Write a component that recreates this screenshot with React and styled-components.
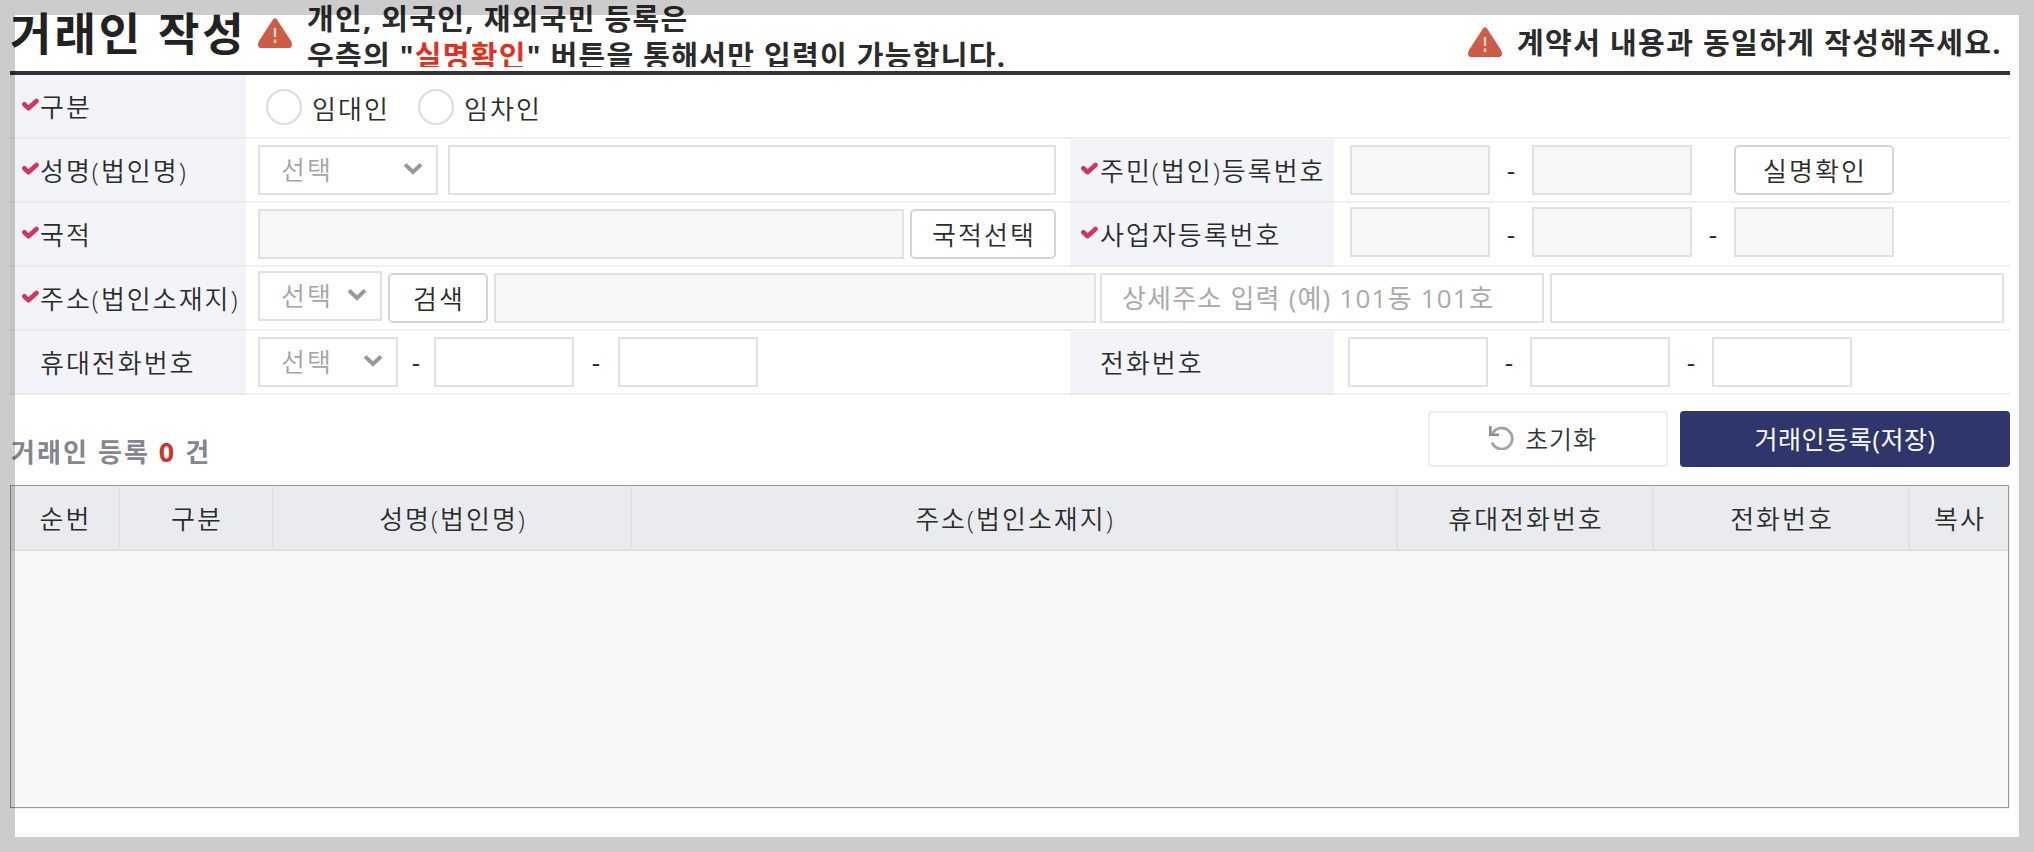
import React from "react";
import styled, { createGlobalStyle } from "styled-components";

const GlobalStyle = createGlobalStyle`
  * {
    box-sizing: border-box;
  }
  body {
    margin: 0;
    background: #fff;
    color: #2b2b2b;
    font-family: "Open Sans", "Noto Sans CJK KR", sans-serif;
    font-size: 26px;
    font-weight: 350;
    letter-spacing: 2.1px;
  }
  input,
  button {
    font: inherit;
    color: inherit;
    letter-spacing: inherit;
  }
`;

const Page = styled.div`
  position: relative;
  width: 2034px;
  height: 852px;
  padding: 0 24px 0 10px;
  overflow: hidden;
`;

// dimmed frame that lies over the edges of the popup
const DimFrame = styled.div`
  position: absolute;
  top: 0;
  left: 0;
  right: 0;
  bottom: 0;
  border: 15px solid rgba(0, 0, 0, 0.2);
  pointer-events: none;
`;

const Header = styled.header`
  display: flex;
  align-items: flex-start;
  height: 75px;
  border-bottom: 4px solid #333433;
`;

const Title = styled.h1`
  width: 236px;
  margin: 0 12px 0 0;
  padding-top: 4px;
  color: #222;
  font-size: 45px;
  font-weight: 700;
  line-height: 60px;
  letter-spacing: 3px;
  white-space: nowrap;
`;

const Hint = styled.p`
  height: 67px;
  margin: 0 0 0 15px;
  overflow: hidden;
  font-size: 29px;
  font-weight: 700;
  line-height: 37px;
  letter-spacing: 1.3px;
  white-space: nowrap;
`;

const Red = styled.span`
  color: #df3020;
`;

const Notice = styled.div`
  display: flex;
  align-items: flex-start;
  margin-left: auto;
  padding: 27px 8px 0 0;
  font-size: 29px;
  font-weight: 700;
  line-height: 31px;
  letter-spacing: 1.36px;
  white-space: nowrap;
`;

const NoticeText = styled.span`
  margin-left: 15px;
`;

const WarnSvg = styled.svg`
  flex: none;
  width: 34px;
  height: 30px;
  margin-top: ${(props) => props.$top || 0}px;
`;

const Row = styled.div`
  display: flex;
  height: 64px;
`;

const Label = styled.div`
  display: flex;
  align-items: center;
  flex: none;
  width: ${(props) => (props.$right ? 264 : 236)}px;
  padding: 0 0 0 ${(props) => (props.$right ? 11 : 12)}px;
  background: #f3f4f9;
  border-bottom: 2px solid #e9eaef;
  letter-spacing: 2px;
  white-space: nowrap;
`;

const CheckBox = styled.span`
  display: flex;
  flex: none;
  width: ${(props) => (props.$right ? 19 : 18)}px;
  margin-top: -2px;
`;

const Cell = styled.div`
  display: flex;
  align-items: center;
  flex: ${(props) => (props.$width ? "none" : 1)};
  width: ${(props) => (props.$width ? props.$width + "px" : "auto")};
  padding-left: ${(props) => props.$pad || 12}px;
  border-bottom: 2px solid #efeff4;
`;

const Radio = styled.label`
  display: flex;
  align-items: center;
  width: 152px;
  padding: 2px 0 0 8px;
`;

const RadioMark = styled.span`
  width: 36px;
  height: 36px;
  margin-right: 10px;
  border: 2px solid #dcdcdc;
  border-radius: 50%;
  background: #fff;
`;

const RadioText = styled.span`
  padding-top: 2px;
`;

const Input = styled.input`
  flex: none;
  width: ${(props) => props.$width}px;
  height: 50px;
  margin: 0 0 ${(props) => props.$lift || 0}px ${(props) => props.$gap || 0}px;
  padding: 0 20px;
  border: 2px solid #e1e1e1;
  border-radius: 0;
  background: ${(props) => (props.disabled ? "#f7f7f7" : "#fff")};
  &::placeholder {
    color: #aaa;
    font-weight: 400;
    letter-spacing: 1.2px;
    opacity: 1;
  }
`;

const SelectBox = styled.div`
  display: flex;
  align-items: center;
  justify-content: space-between;
  flex: none;
  width: ${(props) => props.$width}px;
  height: 50px;
  margin-bottom: ${(props) => props.$lift || 0}px;
  padding: 0 14px 2px 21px;
  border: 2px solid #e1e1e1;
  background: #fff;
  color: #a5a5a5;
`;

const SmallButton = styled.button`
  flex: none;
  width: ${(props) => props.$width}px;
  height: 50px;
  margin: 0 0 0 ${(props) => props.$gap}px;
  padding: 0 0 0 2px;
  border: 2px solid #d5d5d5;
  border-radius: 5px;
  background: #fff;
`;

const Dash = styled.span`
  width: ${(props) => props.$width || 42}px;
  font-weight: 500;
  text-align: center;
  letter-spacing: 0;
`;

const Toolbar = styled.div`
  display: flex;
  align-items: flex-start;
  height: 90px;
  padding-top: 16px;
`;

const Count = styled.div`
  flex: 1;
  padding: 22px 0 0 1px;
  color: #83868c;
  font-weight: 700;
  line-height: 38px;
`;

const CountNumber = styled.span`
  color: #cc3333;
  font-size: 27px;
`;

const ActionButton = styled.button`
  display: flex;
  align-items: center;
  justify-content: center;
  width: ${(props) => props.$width}px;
  height: 56px;
  margin: 0 0 0 12px;
  padding: 0 ${(props) => (props.$primary ? 0 : 10)}px 2px 0;
  border: 2px solid ${(props) => (props.$primary ? "#2f366b" : "#ecedf1")};
  border-radius: 4px;
  background: ${(props) => (props.$primary ? "#2f366b" : "#fff")};
  color: ${(props) => (props.$primary ? "#fff" : "#333")};
  font-size: 25px;
  font-weight: ${(props) => (props.$primary ? 400 : 350)};
  letter-spacing: ${(props) => (props.$primary ? 0.6 : 0.8)}px;
`;

const ResetSvg = styled.svg`
  width: 25px;
  height: 24px;
  margin-right: 11px;
`;

const Grid = styled.div`
  width: 1999px;
  height: 323px;
  border: 1px solid #999;
  background: #f7f7f7;
  box-shadow: 1px 1px 0 #eee;
`;

const GridHead = styled.div`
  display: grid;
  grid-template-columns: 109px 154px 358px 766px 256px 256px 98px;
  height: 65px;
  padding-top: 1px;
  border-bottom: 2px solid #dfe1e8;
  background: #eaebef;
`;

const HeadCell = styled.div`
  display: flex;
  align-items: center;
  justify-content: center;
  padding-left: 2px;
  border-right: 2px solid #dfe1e8;
  letter-spacing: 2px;
  &:last-child {
    border-right: 0;
  }
`;

const Warning = ({ top }) => (
  <WarnSvg viewBox="0 0 34 30" $top={top}>
    <path
      d="M15 1.5Q17-1 19 1.5L33 23Q36 30 30 30H4Q-2 30 1 23Z"
      fill="#cd5b45"
    />
    <path d="M17 10V19M17 21.5V25" stroke="#f7ddd8" strokeWidth="2.4" />
  </WarnSvg>
);

const Check = () => (
  <svg width="17" height="14" viewBox="0 0 17 14">
    <path
      d="M2.3 6.3L6.5 10.2L14.5 3"
      fill="none"
      stroke="#d0355f"
      strokeWidth="4.6"
      strokeLinecap="round"
      strokeLinejoin="round"
    />
  </svg>
);

const Select = ({ width, lift }) => (
  <SelectBox $width={width} $lift={lift}>
    <span>선택</span>
    <svg width="18" height="12" viewBox="0 0 18 12">
      <path d="M1 1.5L9 9L17 1.5" fill="none" stroke="#999" strokeWidth="4" />
    </svg>
  </SelectBox>
);

const FieldLabel = ({ required, right, children }) => (
  <Label $right={right}>
    <CheckBox $right={right}>{required && <Check />}</CheckBox>
    {children}
  </Label>
);

const columns = [
  "순번",
  "구분",
  "성명(법인명)",
  "주소(법인소재지)",
  "휴대전화번호",
  "전화번호",
  "복사",
];

const App = () => {
  return (
    <Page>
      <GlobalStyle />
      <Header>
        <Title>거래인 작성</Title>
        <Warning top={18} />
        <Hint>
          개인, 외국인, 재외국민 등록은
          <br />
          우측의 "<Red>실명확인</Red>" 버튼을 통해서만 입력이 가능합니다.
        </Hint>
        <Notice>
          <Warning />
          <NoticeText>계약서 내용과 동일하게 작성해주세요.</NoticeText>
        </Notice>
      </Header>
      <Row>
        <FieldLabel required>구분</FieldLabel>
        <Cell>
          <Radio>
            <RadioMark />
            <RadioText>임대인</RadioText>
          </Radio>
          <Radio>
            <RadioMark />
            <RadioText>임차인</RadioText>
          </Radio>
        </Cell>
      </Row>
      <Row>
        <FieldLabel required>성명(법인명)</FieldLabel>
        <Cell $width={824}>
          <Select width={180} />
          <Input $width={608} $gap={10} />
        </Cell>
        <FieldLabel required right>
          주민(법인)등록번호
        </FieldLabel>
        <Cell $pad={16}>
          <Input $width={140} disabled />
          <Dash>-</Dash>
          <Input $width={160} disabled />
          <SmallButton $width={160} $gap={42}>
            실명확인
          </SmallButton>
        </Cell>
      </Row>
      <Row>
        <FieldLabel required>국적</FieldLabel>
        <Cell $width={824}>
          <Input $width={646} disabled />
          <SmallButton $width={146} $gap={6}>
            국적선택
          </SmallButton>
        </Cell>
        <FieldLabel required right>
          사업자등록번호
        </FieldLabel>
        <Cell $pad={16}>
          <Input $width={140} $lift={4} disabled />
          <Dash>-</Dash>
          <Input $width={160} $lift={4} disabled />
          <Dash>-</Dash>
          <Input $width={160} $lift={4} disabled />
        </Cell>
      </Row>
      <Row>
        <FieldLabel required>주소(법인소재지)</FieldLabel>
        <Cell>
          <Select width={124} lift={4} />
          <SmallButton $width={100} $gap={6}>
            검색
          </SmallButton>
          <Input $width={602} $gap={6} disabled />
          <Input
            $width={444}
            $gap={4}
            placeholder="상세주소 입력 (예) 101동 101호"
          />
          <Input $width={454} $gap={6} />
        </Cell>
      </Row>
      <Row>
        <FieldLabel>휴대전화번호</FieldLabel>
        <Cell $width={824}>
          <Select width={140} />
          <Dash $width={36}>-</Dash>
          <Input $width={140} />
          <Dash $width={44}>-</Dash>
          <Input $width={140} />
        </Cell>
        <FieldLabel right>전화번호</FieldLabel>
        <Cell $pad={14}>
          <Input $width={140} />
          <Dash>-</Dash>
          <Input $width={140} />
          <Dash>-</Dash>
          <Input $width={140} />
        </Cell>
      </Row>
      <Toolbar>
        <Count>
          거래인 등록 <CountNumber>0</CountNumber> 건
        </Count>
        <ActionButton $width={240}>
          <ResetSvg viewBox="0 0 25 24">
            <path
              d="M3.5 7.5A10.5 10.5 0 1 1 3 16.5"
              fill="none"
              stroke="#a3a3a3"
              strokeWidth="2.8"
            />
            <path
              d="M1.3 0V8.7H10"
              fill="none"
              stroke="#8c8c8c"
              strokeWidth="2.6"
            />
          </ResetSvg>
          초기화
        </ActionButton>
        <ActionButton $width={330} $primary>
          거래인등록(저장)
        </ActionButton>
      </Toolbar>
      <Grid>
        <GridHead>
          {columns.map((name) => (
            <HeadCell key={name}>{name}</HeadCell>
          ))}
        </GridHead>
      </Grid>
      <DimFrame />
    </Page>
  );
};

export default App;
